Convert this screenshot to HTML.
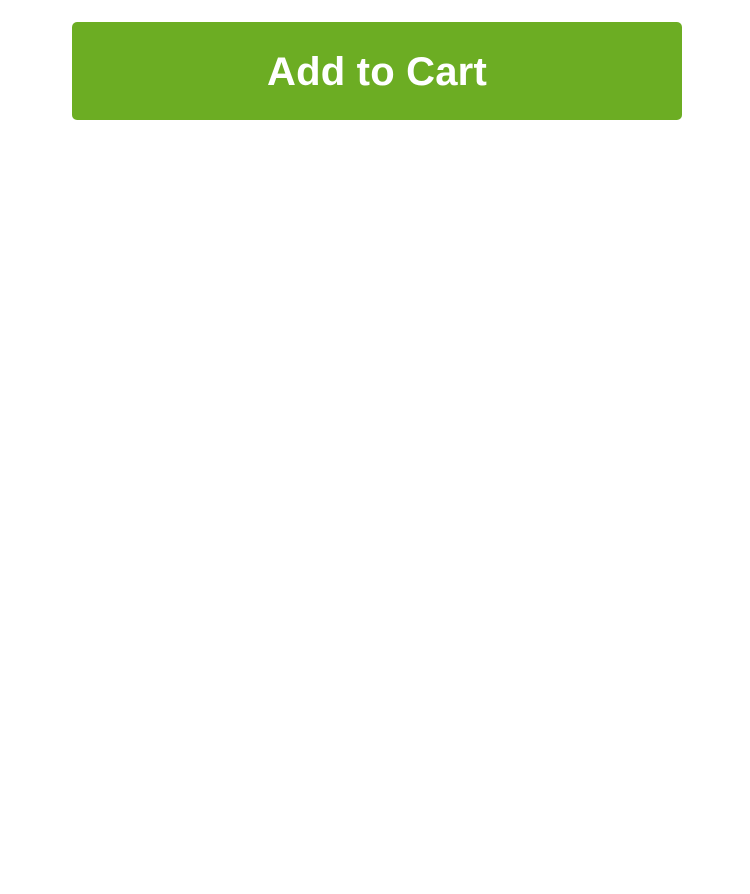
<!DOCTYPE html>
<html><head><meta charset="utf-8"><style>
html,body{margin:0;padding:0;background:#fff;width:750px;height:894px;overflow:hidden}
.btn{position:absolute;left:72px;top:22px;width:610px;height:98px;box-sizing:border-box;padding-top:3px;background:#6cad23;border-radius:5px;color:#fff;font-family:"Liberation Sans",Arial,sans-serif;font-weight:bold;font-size:40px;letter-spacing:0.2px;display:flex;align-items:center;justify-content:center;}
</style></head><body>
<div class="btn">Add to Cart</div>
</body></html>
